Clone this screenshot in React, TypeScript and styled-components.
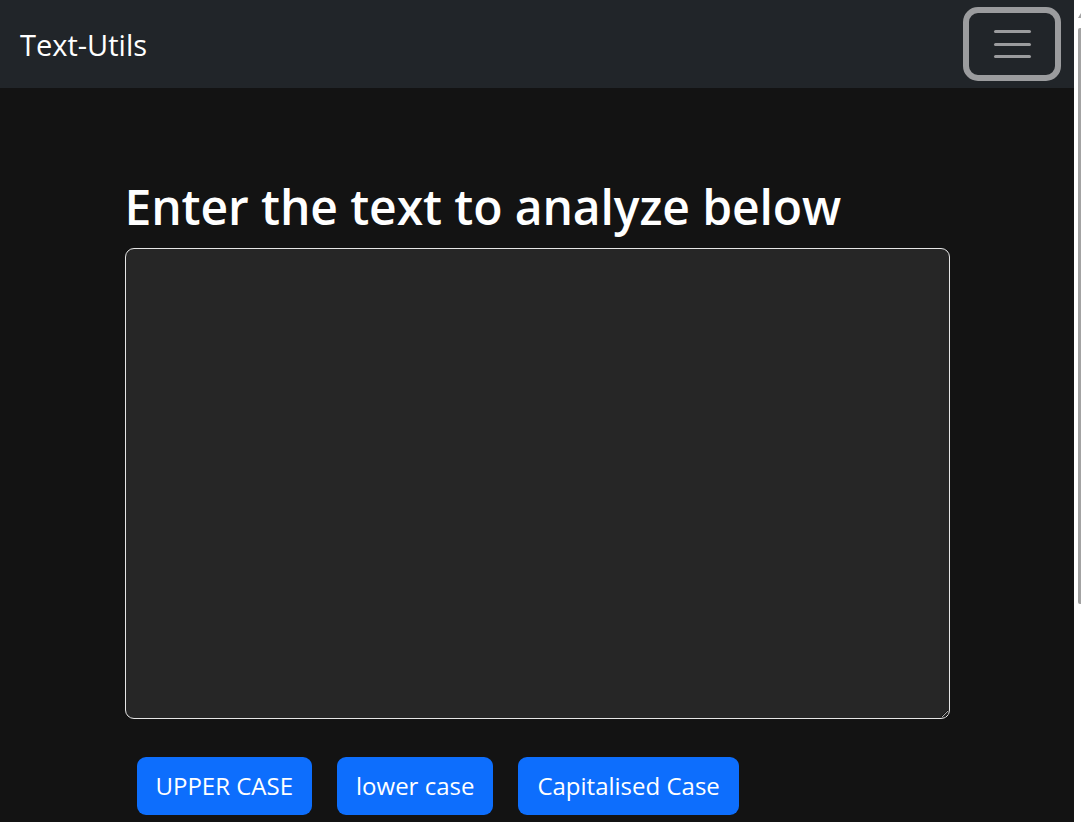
import styled, { createGlobalStyle } from 'styled-components';

const GlobalStyle = createGlobalStyle`
  html, body {
    margin: 0;
    padding: 0;
    background-color: #131313;
  }
  body {
    font-family: 'Open Sans', 'Noto Sans', sans-serif;
    color: #ffffff;
  }
`;

const Page = styled.div`
  min-height: 1120px;
  padding-right: 7px;
  background-color: #131313;
`;

const NavBar = styled.nav`
  height: 88px;
  display: flex;
  align-items: center;
  justify-content: space-between;
  padding: 0 13px 0 20px;
  background-color: #212529;
`;

const Brand = styled.a`
  font-size: 29px;
  color: #ffffff;
  text-decoration: none;
`;

const Toggler = styled.button`
  width: 98px;
  height: 74px;
  display: flex;
  flex-direction: column;
  align-items: center;
  justify-content: center;
  gap: 9.5px;
  background: transparent;
  border: 6px solid #9b9c9e;
  border-radius: 15px;
  cursor: pointer;
`;

const TogglerLine = styled.span`
  display: block;
  width: 37px;
  height: 3px;
  border-radius: 2px;
  background-color: #9b9c9e;
`;

const Container = styled.main`
  width: 825px;
  margin: 0 auto;
  padding-top: 90px;
`;

const Heading = styled.h1`
  margin: 0 0 12px;
  font-size: 48px;
  font-weight: 600;
  line-height: 1.2;
  letter-spacing: -0.1px;
`;

const TextBox = styled.textarea`
  display: block;
  box-sizing: border-box;
  width: 825px;
  height: 471px;
  background-color: #262626;
  border: 1px solid #e6e6e6;
  border-radius: 9px;
  color: #ffffff;
  font-family: inherit;
  font-size: 24px;
  padding: 9px 18px;
  outline: none;
`;

const ButtonRow = styled.div`
  display: flex;
  gap: 25px;
  margin-top: 38px;
  padding-left: 12px;
`;

const ActionButton = styled.button`
  height: 58px;
  padding: 0 19px;
  border: none;
  border-radius: 9px;
  background-color: #0d6efd;
  color: #ffffff;
  font-family: inherit;
  font-size: 24px;
  cursor: pointer;
`;

/* browser scrollbar drawn over the right edge */
const ScrollTrack = styled.div`
  position: fixed;
  top: 0;
  right: 0;
  width: 7px;
  height: 100vh;
  background-color: #ffffff;
`;

const ScrollArrow = styled.div`
  position: absolute;
  top: 13px;
  right: 0;
  width: 0;
  height: 0;
  border-left: 3px solid transparent;
  border-right: 0 solid transparent;
  border-bottom: 5px solid #a3a3a3;
`;

const ScrollThumb = styled.div`
  position: absolute;
  top: 28px;
  right: 0;
  width: 3px;
  height: 576px;
  border-radius: 2px 0 0 2px;
  background-color: #a3a3a3;
`;

export default function App() {
  return (
    <Page>
      <GlobalStyle />
      <NavBar>
        <Brand href="#">Text-Utils</Brand>
        <Toggler aria-label="Toggle navigation">
          <TogglerLine />
          <TogglerLine />
          <TogglerLine />
        </Toggler>
      </NavBar>
      <Container>
        <Heading>Enter the text to analyze below</Heading>
        <TextBox />
        <ButtonRow>
          <ActionButton>UPPER CASE</ActionButton>
          <ActionButton>lower case</ActionButton>
          <ActionButton>Capitalised Case</ActionButton>
        </ButtonRow>
      </Container>
      <ScrollTrack>
        <ScrollArrow />
        <ScrollThumb />
      </ScrollTrack>
    </Page>
  );
}
